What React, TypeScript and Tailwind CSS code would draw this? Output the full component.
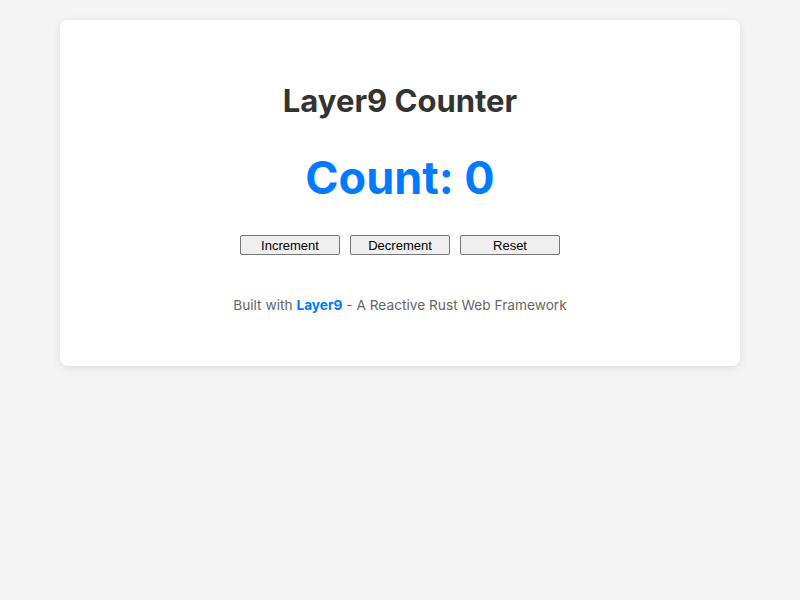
const buttons = ["Increment", "Decrement", "Reset"];

export default function App() {
  return (
    <div className="min-h-[600px] bg-[#f4f4f4] p-5 font-['Inter',sans-serif]">
      <div className="mx-auto max-w-[680px] rounded-lg bg-white px-10 py-10 text-center shadow-[0_2px_10px_rgba(0,0,0,0.1)]">
        <h1 className="my-[21px] text-[31px] leading-[39px] font-bold text-[#333]">Layer9 Counter</h1>
        <div className="my-[21px] pt-2 text-[45px] leading-[58px] font-bold text-[#007bff]">Count: 0</div>
        <div className="mt-7 flex justify-center gap-2.5">
          {buttons.map((b) => (
            <button
              key={b}
              className="h-5 w-[100px] rounded-[2px] border border-[#767676] bg-[#efefef] font-['Liberation_Sans',Arial,sans-serif] text-[13px] leading-none text-black"
            >
              {b}
            </button>
          ))}
        </div>
        <p className="mt-10 mb-2.5 text-[13.7px] text-[#666]">
          Built with <span className="font-bold text-[#007bff]">Layer9</span> - A Reactive Rust Web Framework
        </p>
      </div>
    </div>
  );
}
